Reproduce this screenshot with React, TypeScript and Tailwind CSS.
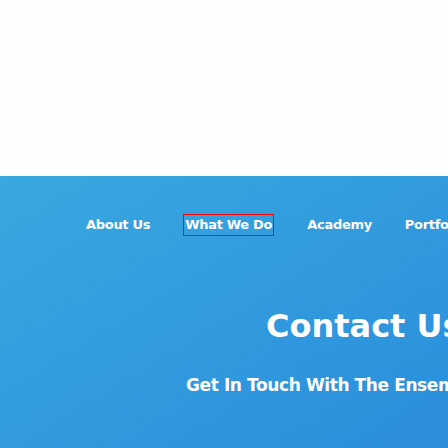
export default function App() {
  return (
    <div className="w-[448px] h-[448px] overflow-hidden bg-[#fefefe] font-['DejaVu_Sans',sans-serif]">
      <div className="h-[176px] bg-[#fefefe]" />
      <div className="h-[272px] bg-gradient-to-br from-[#38a8df] to-[#2b8edc] overflow-hidden">
        <nav className="flex items-center pl-[86px] pt-[38px] gap-[33px] whitespace-nowrap text-white font-bold text-[13px] tracking-[-0.3px]">
          <span>About Us</span>
          <span className="border border-[#ff0000] px-px">What We Do</span>
          <span>Academy</span>
          <span>Portfolio</span>
        </nav>
        <div className="pl-[266px] pt-[74px] whitespace-nowrap text-white font-bold text-[32px] leading-none">Contact Us</div>
        <div className="pl-[186px] pt-[35px] whitespace-nowrap text-white font-bold text-[17px] leading-none tracking-[-0.4px]">Get In Touch With The Ensemble</div>
      </div>
    </div>
  );
}
